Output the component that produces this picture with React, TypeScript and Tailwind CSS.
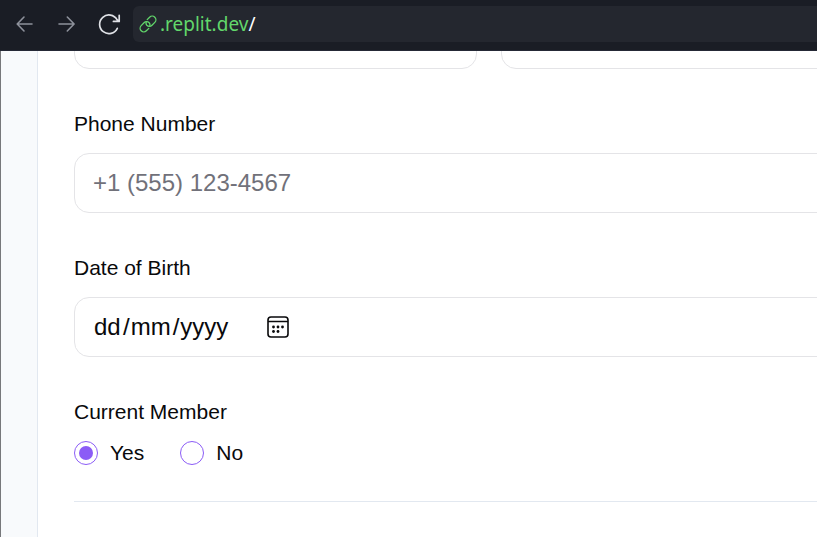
import type { ReactNode } from "react";

function ToolbarButton({ label, className, children }: { label: string; className: string; children: ReactNode }) {
  return (
    <button type="button" aria-label={label} className={`flex h-9 w-[42px] shrink-0 items-center justify-center ${className}`}>
      {children}
    </button>
  );
}

function BrowserToolbar() {
  return (
    <header className="flex h-[51px] shrink-0 items-start border-b border-[#252936] bg-[#1a1d25] pt-1.5 pl-1">
      <ToolbarButton label="Back" className="text-[#8d919b]">
        <svg width="18" height="18" viewBox="0 0 18 18" fill="none" stroke="currentColor" strokeWidth="1.6" strokeLinecap="round" strokeLinejoin="round">
          <path d="M16 9H1.5M8 2L1.2 9l6.8 7" />
        </svg>
      </ToolbarButton>
      <ToolbarButton label="Forward" className="text-[#8d919b]">
        <svg width="18" height="18" viewBox="0 0 18 18" fill="none" stroke="currentColor" strokeWidth="1.6" strokeLinecap="round" strokeLinejoin="round">
          <path d="M1 9h15M9.3 2l6.8 7-6.8 7" />
        </svg>
      </ToolbarButton>
      <ToolbarButton label="Reload" className="text-[#dfe1e6]">
        <svg width="24" height="24" viewBox="0 0 24 24" fill="none" stroke="currentColor" strokeWidth="1.7" strokeLinecap="round" strokeLinejoin="round">
          <path d="M20.3 16.3A9.3 9.3 0 1 1 20 7.7L21.8 9.2M22.2 3.4v6H16.4" />
        </svg>
      </ToolbarButton>
      <div className="ml-[3px] flex h-9 flex-1 items-center gap-[3px] rounded-l-md bg-[#24272f] pl-1.5 font-['Noto_Sans',sans-serif] text-[19px] text-[#62d76b]">
        <svg width="18" height="18" viewBox="0 0 18 18" fill="none" stroke="currentColor" strokeWidth="1.3" strokeLinecap="round" aria-hidden="true">
          <path d="M8.2 4.6L10.6 2.2a3.6 3.6 0 0 1 5.2 5.2L13 10.2a3.6 3.6 0 0 1-5.2 0a3.2 3.2 0 0 1-.6-3.2" />
          <path d="M9.8 13.4L7.4 15.8a3.6 3.6 0 0 1-5.2-5.2L5 7.8a3.6 3.6 0 0 1 5.2 0a3.2 3.2 0 0 1 .6 3.2" />
        </svg>
        <span>
          .replit.dev<span className="text-white">/</span>
        </span>
      </div>
    </header>
  );
}

const fieldBox = "h-[60px] w-full rounded-[15px] border border-[#e4e4e7] bg-white px-[18px] text-2xl";
const segment = "min-w-0 bg-transparent px-px outline-none placeholder:text-[#09090b]";

function DateField() {
  return (
    <div role="group" aria-labelledby="dob-label" className={`flex items-center ${fieldBox}`}>
      <input id="dob-day" aria-label="Day" placeholder="dd" inputMode="numeric" className={`w-[30px] ${segment}`} />
      <span>/</span>
      <input aria-label="Month" placeholder="mm" inputMode="numeric" className={`w-[43px] ${segment}`} />
      <span>/</span>
      <input aria-label="Year" placeholder="yyyy" inputMode="numeric" className={`w-[51px] ${segment}`} />
      <button type="button" aria-label="Open calendar" className="ml-9">
        <svg width="24" height="24" viewBox="0 0 24 24" fill="none">
          <rect x="2" y="2" width="20" height="20" rx="3" stroke="#09090b" strokeWidth="1.6" />
          <path d="M2 6.5h20" stroke="#09090b" strokeWidth="1.5" />
          <g fill="#09090b">
            <circle cx="7.5" cy="12" r="1.4" />
            <circle cx="12" cy="12" r="1.4" />
            <circle cx="16.5" cy="12" r="1.4" />
            <circle cx="7.5" cy="16.5" r="1.4" />
            <circle cx="12" cy="16.5" r="1.4" />
          </g>
        </svg>
      </button>
    </div>
  );
}

function RadioOption({ label, defaultChecked }: { label: string; defaultChecked?: boolean }) {
  return (
    <label className="flex items-center gap-3 leading-6">
      <input
        type="radio"
        name="member"
        defaultChecked={defaultChecked}
        className="size-6 appearance-none rounded-full border border-[#8b5cf6] bg-clip-content p-1 checked:bg-[#8b5cf6]"
      />
      {label}
    </label>
  );
}

export default function App() {
  return (
    <div className="flex h-screen flex-col overflow-hidden font-['Liberation_Sans',Arial,sans-serif] text-[21px] text-[#09090b]">
      <BrowserToolbar />
      <main className="flex min-h-0 flex-1 overflow-hidden border-l border-[#77787b] bg-[#f8fafc] pl-9">
        <form className="-mr-[124px] flex-1 border-x border-[#e2e8f0] bg-white px-9">
          <div className="-mt-[42px] grid grid-cols-2 gap-6">
            <input aria-label="First name" className={fieldBox} />
            <input aria-label="Last name" className={fieldBox} />
          </div>
          <div className="mt-9 flex flex-col gap-2.5">
            <label htmlFor="phone" className="leading-[38px]">Phone Number</label>
            <input id="phone" type="tel" placeholder="+1 (555) 123-4567" className={`${fieldBox} placeholder:text-[#71717a]`} />
          </div>
          <div className="mt-9 flex flex-col gap-2.5">
            <label id="dob-label" htmlFor="dob-day" className="leading-[38px]">Date of Birth</label>
            <DateField />
          </div>
          <fieldset className="mt-9">
            <legend className="mb-2.5 leading-[38px]">Current Member</legend>
            <div className="flex gap-9">
              <RadioOption label="Yes" defaultChecked />
              <RadioOption label="No" />
            </div>
          </fieldset>
          <hr className="mt-9 border-[#e2e8f0]" />
        </form>
      </main>
    </div>
  );
}
